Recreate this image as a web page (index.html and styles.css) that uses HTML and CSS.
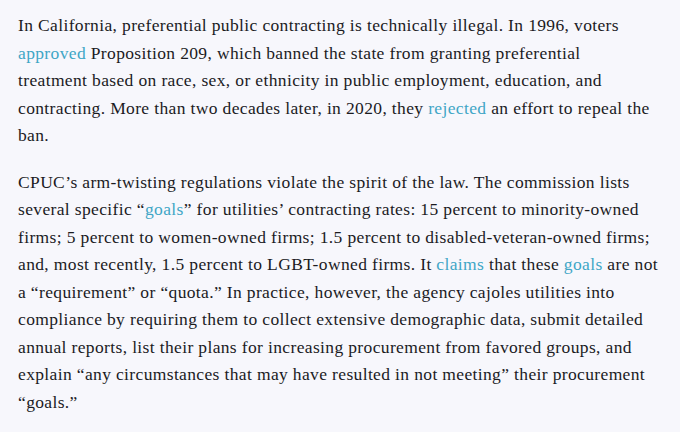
FILE: index.html
```html
<!DOCTYPE html>
<html lang="en">
<head>
<meta charset="utf-8">
<link rel="stylesheet" href="styles.css">
</head>
<body>
<main class="article">
<p class="para">In California, preferential public contracting is technically illegal. In 1996, voters <a class="link" href="#">approved</a> Proposition 209, which banned the state from granting preferential<br>treatment based on race, sex, or ethnicity in public employment, education, and contracting. More than two decades later, in 2020, they <a class="link" href="#">rejected</a> an effort to repeal the ban.</p>
<p class="para">CPUC’s arm-twisting regulations violate the spirit of the law. The commission lists several specific “<a class="link" href="#">goals</a>” for utilities’ contracting rates: 15 percent to minority-owned firms; 5 percent to women-owned firms; 1.5 percent to disabled-veteran-owned firms; and, most recently, 1.5 percent to LGBT-owned firms. It <a class="link" href="#">claims</a> that these <a class="link" href="#">goals</a> are not a “requirement” or “quota.” In practice, however, the agency cajoles utilities into compliance by requiring them to collect extensive demographic data, submit detailed annual reports, list their plans for increasing procurement from favored groups, and explain “any circumstances that may have resulted in not meeting” their procurement “goals.”</p>
</main>
</body>
</html>
```
FILE: styles.css
```css
html, body {
  margin: 0;
  padding: 0;
  background: #f7f7fc;
}
.article {
  padding: 12px 14px 0 18px;
  width: 648px;
  font-family: "Liberation Serif", "Times New Roman", serif;
  font-size: 17.5px;
  line-height: 27.5px;
  letter-spacing: 0.36px;
  color: #1b1b1f;
}
.para {
  margin: 0 0 19px 0;
}
.link {
  color: #3fa6c6;
  text-decoration: none;
}
```
